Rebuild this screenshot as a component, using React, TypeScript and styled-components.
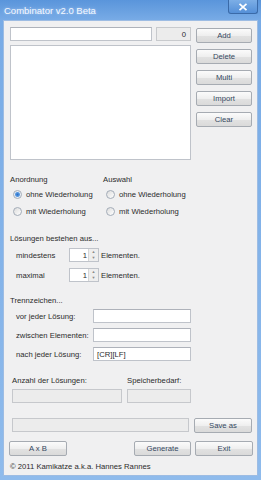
import React, { useState } from 'react';
import styled, { createGlobalStyle } from 'styled-components';

const GlobalStyle = createGlobalStyle`
  html, body {
    margin: 0;
    padding: 0;
    background: #ffffff;
  }
  body {
    font-family: 'Liberation Sans', Arial, sans-serif;
    font-size: 7.7px;
    color: #2b2b2b;
  }
`;

const App = () => {
  const [order, setOrder] = useState<number>(0);
  const [pick, setPick] = useState<number>(-1);

  return (
    <Window>
      <GlobalStyle />
      <TitleBar>
        <Title>Combinator v2.0 Beta</Title>
        <CloseBtn>
          <svg width="10" height="8" viewBox="0 0 10 8">
            <path d="M1.5 0.8 L8.5 7.2 M8.5 0.8 L1.5 7.2" stroke="#ffffff" strokeWidth="1.7" />
          </svg>
        </CloseBtn>
      </TitleBar>
      <Body>
        <TopArea>
          <LeftCol>
            <TopRow>
              <TextBox width={142} />
              <CountBox>0</CountBox>
            </TopRow>
            <ListBox />
          </LeftCol>
          <ButtonCol>
            <Button width={56}>Add</Button>
            <Button width={56}>Delete</Button>
            <Button width={56}>Multi</Button>
            <Button width={56}>Import</Button>
            <Button width={56}>Clear</Button>
          </ButtonCol>
        </TopArea>

        <Groups>
          <Group>
            <Label>Anordnung</Label>
            <RadioRow onClick={() => setOrder(0)}>
              <Radio checked={order === 0} />
              <span>ohne Wiederholung</span>
            </RadioRow>
            <RadioRow onClick={() => setOrder(1)}>
              <Radio checked={order === 1} />
              <span>mit Wiederholung</span>
            </RadioRow>
          </Group>
          <Group>
            <Label>Auswahl</Label>
            <RadioRow onClick={() => setPick(0)}>
              <Radio checked={pick === 0} />
              <span>ohne Wiederholung</span>
            </RadioRow>
            <RadioRow onClick={() => setPick(1)}>
              <Radio checked={pick === 1} />
              <span>mit Wiederholung</span>
            </RadioRow>
          </Group>
        </Groups>

        <Section top={11}>Lösungen bestehen aus...</Section>
        <SpinRow top={3}>
          <SpinLabel>mindestens</SpinLabel>
          <Spin>
            <SpinValue>1</SpinValue>
            <SpinArrows>
              <span>▲</span>
              <span>▼</span>
            </SpinArrows>
          </Spin>
          <span>Elementen.</span>
        </SpinRow>
        <SpinRow top={6}>
          <SpinLabel>maximal</SpinLabel>
          <Spin>
            <SpinValue>1</SpinValue>
            <SpinArrows>
              <span>▲</span>
              <span>▼</span>
            </SpinArrows>
          </Spin>
          <span>Elementen.</span>
        </SpinRow>

        <Section top={11}>Trennzeichen...</Section>
        <SepRow top={2}>
          <SepLabel>vor jeder Lösung:</SepLabel>
          <TextBox width={98} />
        </SepRow>
        <SepRow top={5}>
          <SepLabel>zwischen Elementen:</SepLabel>
          <TextBox width={98} />
        </SepRow>
        <SepRow top={5}>
          <SepLabel>nach jeder Lösung:</SepLabel>
          <TextBox width={98}>[CR][LF]</TextBox>
        </SepRow>

        <StatsLabels>
          <StatLabel width={115}>Anzahl der Lösungen:</StatLabel>
          <StatLabel width={64}>Speicherbedarf:</StatLabel>
        </StatsLabels>
        <StatsRow>
          <GreyBox width={110} />
          <GreyBox width={64} />
        </StatsRow>

        <SaveRow>
          <GreyBox width={177} />
          <Button width={58}>Save as</Button>
        </SaveRow>
        <ActionRow>
          <Button width={58}>A x B</Button>
          <Spacer />
          <Button width={57}>Generate</Button>
          <Button width={58}>Exit</Button>
        </ActionRow>
        <Footer>© 2011 Kamikatze a.k.a. Hannes Rannes</Footer>
      </Body>
    </Window>
  );
};

export default App;

interface IWidth {
  width: number;
}
interface ITop {
  top: number;
}

const Window = styled.div`
  width: 261px;
  height: 480px;
  box-sizing: border-box;
  display: flex;
  flex-direction: column;
  background: linear-gradient(180deg, #5a95db 0px, #78abe6 20px, #8fbbec 100%);
  padding: 0 3px 4px 3px;
`;

const TitleBar = styled.div`
  height: 20px;
  display: flex;
  align-items: flex-start;
  justify-content: space-between;
`;

const Title = styled.div`
  margin: 5px 0 0 1px;
  font-size: 9.5px;
  color: #f4f8ff;
  text-shadow: 0 0 3px rgba(190, 215, 250, 0.9);
`;

const CloseBtn = styled.div`
  width: 30px;
  height: 14px;
  box-sizing: border-box;
  border: 1px solid #3a6aa8;
  border-top: none;
  border-radius: 0 0 3px 3px;
  background: linear-gradient(180deg, #7caee6, #5590d8);
  display: flex;
  align-items: center;
  justify-content: center;
`;

const Body = styled.div`
  flex: 1;
  background: #f0f0f1;
  border: 1px solid #9dbce3;
  display: flex;
  flex-direction: column;
  padding: 6px 0 0 0;
  box-sizing: border-box;
`;

const TopArea = styled.div`
  display: flex;
  height: 134px;
`;

const LeftCol = styled.div`
  margin-left: 6px;
  width: 181px;
  display: flex;
  flex-direction: column;
  gap: 4px;
`;

const TopRow = styled.div`
  display: flex;
  gap: 4px;
`;

const TextBox = styled.div<IWidth>`
  width: ${p => p.width}px;
  height: 14px;
  box-sizing: border-box;
  background: #ffffff;
  border: 1px solid #bfc3ca;
  border-top-color: #aeb2ba;
  padding: 0 3px;
  display: flex;
  align-items: center;
`;

const CountBox = styled.div`
  width: 35px;
  height: 14px;
  box-sizing: border-box;
  border: 1px solid #c8cacd;
  background: #ececec;
  display: flex;
  align-items: center;
  justify-content: flex-end;
  padding-right: 4px;
`;

const ListBox = styled.div`
  height: 115px;
  background: #ffffff;
  border: 1px solid #bfc3ca;
  box-sizing: border-box;
`;

const ButtonCol = styled.div`
  margin-left: 5px;
  padding-top: 1px;
  display: flex;
  flex-direction: column;
  gap: 6px;
`;

const Button = styled.div<IWidth>`
  width: ${p => p.width}px;
  height: 15px;
  box-sizing: border-box;
  border: 1px solid #a6abb2;
  border-radius: 2px;
  background: linear-gradient(180deg, #fbfbfb 0%, #efefef 50%, #e2e2e2 51%, #dadada 100%);
  display: flex;
  align-items: center;
  justify-content: center;
  color: #34475e;
  cursor: pointer;
`;

const Groups = styled.div`
  margin-top: 11px;
  margin-left: 6px;
  display: flex;
`;

const Group = styled.div`
  width: 93px;
  display: flex;
  flex-direction: column;
`;

const Label = styled.div`
  height: 14px;
  display: flex;
  align-items: center;
`;

const RadioRow = styled.div`
  height: 17px;
  display: flex;
  align-items: center;
  gap: 4px;
  padding-left: 3px;
  cursor: pointer;
`;

const Radio = styled.span<{ checked: boolean }>`
  width: 9px;
  height: 9px;
  box-sizing: border-box;
  border-radius: 50%;
  border: 1px solid #a3acb8;
  background: ${p =>
    p.checked
      ? 'radial-gradient(circle, #2a6fc9 0px, #5a9ae0 2px, #e8eef6 3px, #f6f6f6 100%)'
      : 'linear-gradient(135deg, #dcdcdc, #ffffff)'};
`;

const Section = styled.div<ITop>`
  margin-top: ${p => p.top}px;
  margin-left: 6px;
  height: 14px;
  display: flex;
  align-items: center;
`;

const SpinRow = styled.div<ITop>`
  margin-top: ${p => p.top}px;
  margin-left: 12px;
  height: 14px;
  display: flex;
  align-items: center;
`;

const SpinLabel = styled.span`
  width: 53px;
`;

const Spin = styled.div`
  width: 30px;
  height: 14px;
  box-sizing: border-box;
  border: 1px solid #bfc3ca;
  background: #ffffff;
  display: flex;
  margin-right: 2px;
`;

const SpinValue = styled.div`
  flex: 1;
  display: flex;
  align-items: center;
  justify-content: flex-end;
  padding-right: 1px;
`;

const SpinArrows = styled.div`
  width: 9px;
  display: flex;
  flex-direction: column;
  background: #eeeeee;
  border-left: 1px solid #d6d6d6;
  span {
    flex: 1;
    font-size: 4px;
    line-height: 6px;
    color: #8a8a8a;
    text-align: center;
  }
`;

const SepRow = styled.div<ITop>`
  margin-top: ${p => p.top}px;
  margin-left: 12px;
  height: 14px;
  display: flex;
  align-items: center;
`;

const SepLabel = styled.span`
  width: 77px;
`;

const StatsLabels = styled.div`
  margin-top: 12px;
  margin-left: 8px;
  height: 14px;
  display: flex;
  align-items: center;
`;

const StatLabel = styled.span<IWidth>`
  width: ${p => p.width}px;
`;

const StatsRow = styled.div`
  margin-top: 2px;
  margin-left: 8px;
  display: flex;
  gap: 5px;
`;

const GreyBox = styled.div<IWidth>`
  width: ${p => p.width}px;
  height: 14px;
  box-sizing: border-box;
  border: 1px solid #c6c8cc;
  background: #ececec;
`;

const SaveRow = styled.div`
  margin-top: 15px;
  margin-left: 8px;
  display: flex;
  gap: 5px;
`;

const ActionRow = styled.div`
  margin-top: 8px;
  margin-left: 5px;
  width: 244px;
  display: flex;
  gap: 4px;
`;

const Spacer = styled.div`
  flex: 1;
`;

const Footer = styled.div`
  margin-top: 3px;
  margin-left: 6px;
  height: 14px;
  display: flex;
  align-items: center;
`;
